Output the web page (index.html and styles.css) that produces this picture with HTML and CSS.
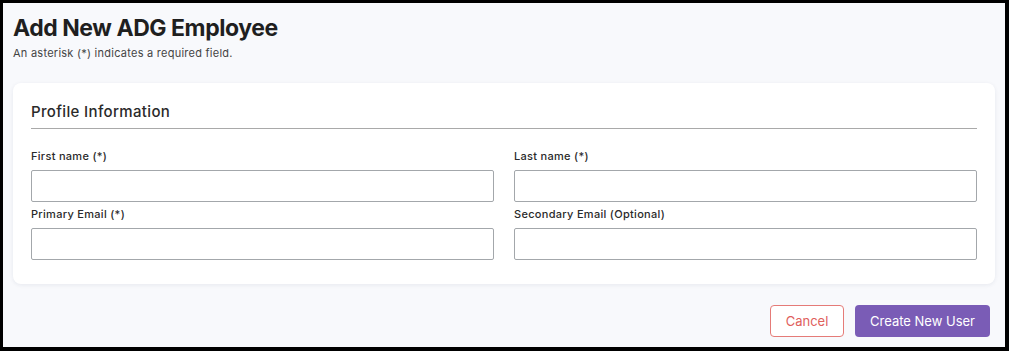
FILE: index.html
```html
<!DOCTYPE html>
<html>

<head>
    <title>Add New ADG Employee</title>
    <link rel="stylesheet" href="styles.css">
</head>

<body>
    <div class="frame">
        <h1>Add New ADG Employee</h1>
        <p class="note">An asterisk (*) indicates a required field.</p>

        <div class="card">
            <h2>Profile Information</h2>
            <form class="fields">
                <div class="form-group">
                    <label>First name (*)</label>
                    <input type="text" name="first_name">
                </div>
                <div class="form-group">
                    <label>Last name (*)</label>
                    <input type="text" name="last_name">
                </div>
                <div class="form-group">
                    <label>Primary Email (*)</label>
                    <input type="text" name="primary_email">
                </div>
                <div class="form-group">
                    <label>Secondary Email (Optional)</label>
                    <input type="text" name="secondary_email">
                </div>
            </form>
        </div>

        <div class="actions">
            <button type="button" class="btn-cancel">Cancel</button>
            <button type="submit" class="btn-primary">Create New User</button>
        </div>
    </div>
</body>

</html>
```

FILE: styles.css
```css
html, body {
    margin: 0;
    padding: 0;
}

body {
    font-family: Inter, "Noto Sans", sans-serif;
    color: #222;
}

.frame {
    width: 1009px;
    height: 351px;
    box-sizing: border-box;
    border: 3px solid #000;
    border-right-width: 4px;
    border-bottom-width: 4px;
    background: #f8f9fc;
    padding: 11px 10px 0 10px;
}

h1 {
    margin: 0;
    font-size: 23px;
    line-height: 28px;
    font-weight: 700;
    letter-spacing: -0.45px;
    color: #1f1f1f;
}

.note {
    margin: 4px 0 0 0;
    font-size: 11px;
    line-height: 14px;
    letter-spacing: 0.25px;
    color: #444;
}

.card {
    margin-top: 23px;
    background: #fff;
    border-radius: 8px;
    box-shadow: 0 1px 4px rgba(30, 40, 80, 0.08);
    padding: 19px 18px 24px 18px;
}

h2 {
    margin: 0;
    font-size: 15px;
    line-height: 20px;
    font-weight: 500;
    letter-spacing: 0.35px;
    color: #2a2a2a;
    padding-bottom: 6px;
    border-bottom: 1px solid #a9a9a9;
}

.fields {
    display: grid;
    grid-template-columns: 1fr 1fr;
    column-gap: 20px;
    row-gap: 5px;
    margin-top: 20px;
}

.form-group label {
    display: block;
    font-size: 11px;
    line-height: 14px;
    font-weight: 500;
    letter-spacing: 0.3px;
    color: #2a2a2a;
    margin-bottom: 7px;
}

.form-group input {
    display: block;
    width: 100%;
    height: 32px;
    box-sizing: border-box;
    border: 1px solid #a3a7ab;
    border-radius: 2px;
    background: #fff;
    padding: 6px 8px;
    font: inherit;
}

.actions {
    display: flex;
    justify-content: flex-end;
    gap: 11px;
    margin-top: 21px;
    padding-right: 5px;
}

button {
    height: 32px;
    border-radius: 4px;
    font-family: inherit;
    font-size: 13px;
    cursor: pointer;
}

.btn-cancel {
    width: 74px;
    background: #fff;
    border: 1px solid #e57b78;
    color: #e0605c;
}

.btn-primary {
    width: 135px;
    background: #7a5cb6;
    border: none;
    color: #fff;
}
```
